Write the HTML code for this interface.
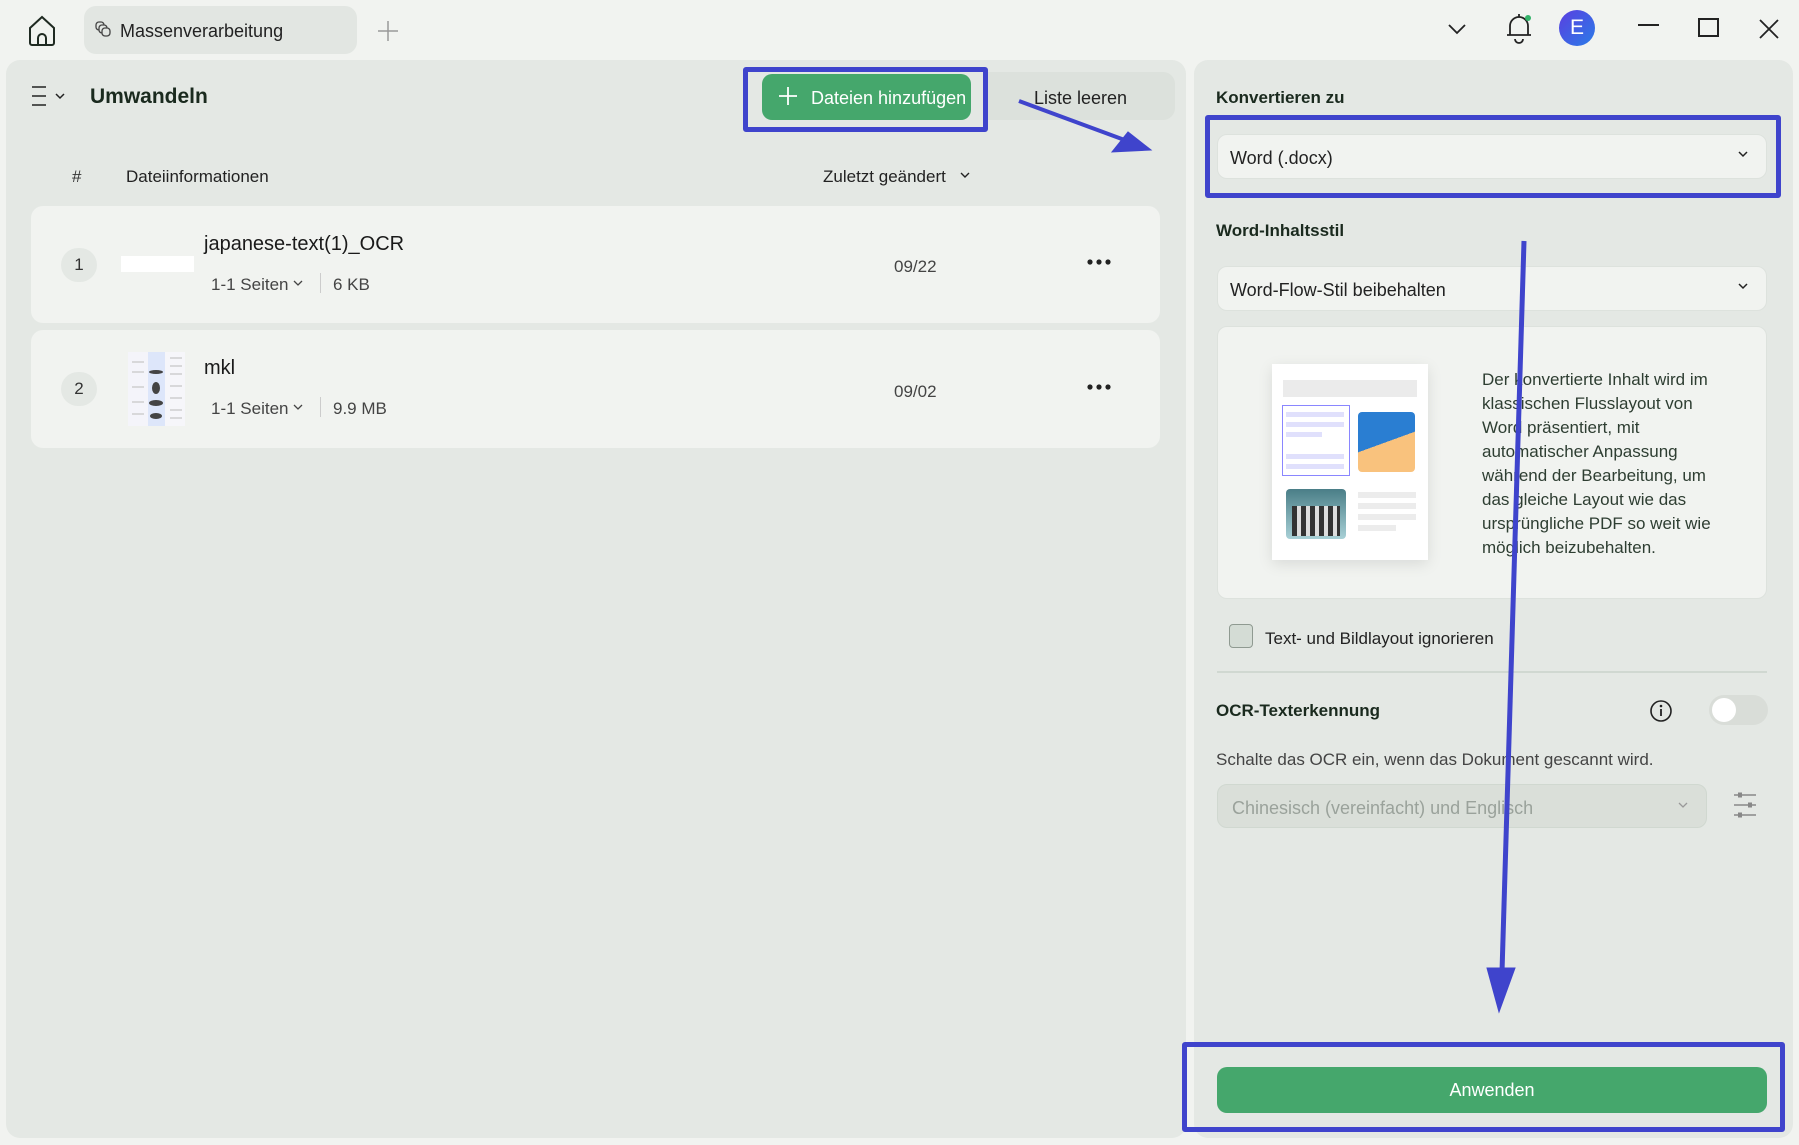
<!DOCTYPE html>
<html><head><meta charset="utf-8"><style>
*{box-sizing:border-box;margin:0;padding:0}
body{width:1799px;height:1145px;background:#f1f3f0;font-family:"Liberation Sans",sans-serif;color:#1f2a22;position:relative;overflow:hidden}
.a{position:absolute}
.panel{background:#e4e8e4;border-radius:14px}
.card{background:#f1f3f0;border-radius:12px}
.dd{background:#f1f3f0;border:1px solid #dde2dd;border-radius:10px}
.t{white-space:nowrap}
.blue{border:5px solid #3f44cc;border-radius:3px}
</style></head><body>
<svg class="a" style="left:26px;top:14px" width="32" height="34" viewBox="0 0 32 34"><path d="M4 14 L16 3 L28 14 V29 a2 2 0 0 1 -2 2 H6 a2 2 0 0 1 -2 -2 Z" fill="none" stroke="#1f2a22" stroke-width="2"/><path d="M12 31 V24 a4 4 0 0 1 8 0 V31" fill="none" stroke="#1f2a22" stroke-width="2"/></svg>
<div class="a" style="left:84px;top:6px;width:273px;height:48px;background:#e2e6e2;border-radius:12px"></div>
<svg class="a" style="left:95px;top:21px" width="16" height="16" viewBox="0 0 16 16"><rect x="1" y="1" width="8" height="8" rx="3" fill="none" stroke="#444" stroke-width="1.3"/><rect x="4" y="4" width="8" height="8" rx="3" fill="#e2e6e2" stroke="#444" stroke-width="1.3"/><rect x="7" y="7" width="8" height="8" rx="3" fill="#e2e6e2" stroke="#444" stroke-width="1.3"/></svg>
<div class="a t" style="left:120px;top:21px;font-size:18px;color:#222">Massenverarbeitung</div>
<svg class="a" style="left:377px;top:20px" width="22" height="22"><path d="M11 1V21M1 11H21" stroke="#999" stroke-width="1.5"/></svg>
<svg class="a" style="left:1447px;top:22px" width="20" height="14"><path d="M2 3 L10 11 L18 3" fill="none" stroke="#222" stroke-width="1.8"/></svg>
<svg class="a" style="left:1504px;top:12px" width="30" height="32" viewBox="0 0 30 32"><path d="M6 23 V14 a9 9 0 0 1 18 0 V23 H3 H27" fill="none" stroke="#222" stroke-width="1.8"/><path d="M15 2v3M11 27 a4 4 0 0 0 8 0" fill="none" stroke="#222" stroke-width="1.8"/><circle cx="24" cy="6" r="3" fill="#34b36a"/></svg>
<div class="a" style="left:1559px;top:10px;width:36px;height:36px;border-radius:50%;background:linear-gradient(135deg,#5a3ee0,#2a7ce8);color:#fff;font-size:21px;text-align:center;line-height:36px">E</div>
<div class="a" style="left:1638px;top:24px;width:21px;height:2px;background:#222"></div>
<div class="a" style="left:1698px;top:18px;width:21px;height:19px;border:2px solid #222"></div>
<svg class="a" style="left:1759px;top:19px" width="20" height="20"><path d="M1 1L19 19M19 1L1 19" stroke="#222" stroke-width="1.8"/></svg>

<div class="a panel" style="left:6px;top:60px;width:1180px;height:1078px"></div>
<svg class="a" style="left:30px;top:85px" width="40" height="22"><path d="M2 2H16M2 11H16M2 20H16" stroke="#222" stroke-width="1.6"/><path d="M26 9L30 13L34 9" fill="none" stroke="#222" stroke-width="1.5"/></svg>
<div class="a t" style="left:90px;top:85px;font-size:21px;font-weight:bold;color:#1a2a1e">Umwandeln</div>
<div class="a" style="left:987px;top:72px;width:188px;height:48px;background:#dce1dc;border-radius:0 12px 12px 0"></div>
<div class="a t" style="left:1034px;top:88px;font-size:18px;color:#222">Liste leeren</div>
<div class="a blue" style="left:743px;top:67px;width:245px;height:65px"></div>
<div class="a" style="left:762px;top:74px;width:209px;height:46px;background:#45a76c;border-radius:10px"></div>
<svg class="a" style="left:778px;top:86px" width="20" height="20"><path d="M10 1V19M1 10H19" stroke="#fff" stroke-width="1.8"/></svg>
<div class="a t" style="left:811px;top:88px;font-size:18px;color:#fff">Dateien hinzufügen</div>

<div class="a t" style="left:72px;top:167px;font-size:17px;color:#333">#</div>
<div class="a t" style="left:126px;top:167px;font-size:17px;color:#222">Dateiinformationen</div>
<div class="a t" style="left:823px;top:167px;font-size:17px;color:#222">Zuletzt geändert</div>
<svg class="a" style="left:959px;top:171px" width="12" height="10"><path d="M2 2L6 6L10 2" fill="none" stroke="#222" stroke-width="1.4"/></svg>

<div class="a card" style="left:31px;top:206px;width:1129px;height:117px"></div>
<div class="a" style="left:61px;top:248px;width:36px;height:34px;border-radius:17px;background:#e4e8e4;text-align:center;line-height:34px;font-size:17px;color:#333">1</div>
<div class="a" style="left:121px;top:256px;width:73px;height:16px;background:#fff"></div>
<div class="a t" style="left:204px;top:233px;font-size:20px;color:#1a1a1a">japanese-text(1)_OCR</div>
<div class="a t" style="left:211px;top:275px;font-size:17px;color:#444">1-1 Seiten</div>
<svg class="a" style="left:292px;top:279px" width="12" height="10"><path d="M2 2L6 6L10 2" fill="none" stroke="#444" stroke-width="1.3"/></svg>
<div class="a" style="left:320px;top:273px;width:1px;height:20px;background:#ccc"></div>
<div class="a t" style="left:333px;top:275px;font-size:17px;color:#444">6 KB</div>
<div class="a t" style="left:894px;top:257px;font-size:17px;color:#444">09/22</div>
<svg class="a" style="left:1086px;top:258px" width="26" height="8"><circle cx="4" cy="4" r="2.6" fill="#222"/><circle cx="13" cy="4" r="2.6" fill="#222"/><circle cx="22" cy="4" r="2.6" fill="#222"/></svg>

<div class="a card" style="left:31px;top:330px;width:1129px;height:118px"></div>
<div class="a" style="left:61px;top:372px;width:36px;height:34px;border-radius:17px;background:#e4e8e4;text-align:center;line-height:34px;font-size:17px;color:#333">2</div>
<div class="a" style="left:128px;top:352px;width:57px;height:74px;background:linear-gradient(90deg,#f4f4fa 0 35%,#dde6fa 35% 65%,#f6f6fa 65%)"></div>
<svg class="a" style="left:128px;top:352px" width="57" height="74"><g stroke="#bbb" stroke-width="1"><path d="M4 10h12M4 20h12M4 35h12M4 50h12M4 62h12M42 6h12M42 14h12M42 22h12M42 34h12M42 46h12M42 58h12M42 66h12"/></g><g fill="#444"><ellipse cx="28" cy="20" rx="7" ry="2"/><ellipse cx="28" cy="36" rx="4" ry="6"/><ellipse cx="28" cy="51" rx="7" ry="3"/><ellipse cx="28" cy="64" rx="6" ry="3"/></g></svg>
<div class="a t" style="left:204px;top:357px;font-size:20px;color:#1a1a1a">mkl</div>
<div class="a t" style="left:211px;top:399px;font-size:17px;color:#444">1-1 Seiten</div>
<svg class="a" style="left:292px;top:403px" width="12" height="10"><path d="M2 2L6 6L10 2" fill="none" stroke="#444" stroke-width="1.3"/></svg>
<div class="a" style="left:320px;top:397px;width:1px;height:20px;background:#ccc"></div>
<div class="a t" style="left:333px;top:399px;font-size:17px;color:#444">9.9 MB</div>
<div class="a t" style="left:894px;top:382px;font-size:17px;color:#444">09/02</div>
<svg class="a" style="left:1086px;top:383px" width="26" height="8"><circle cx="4" cy="4" r="2.6" fill="#222"/><circle cx="13" cy="4" r="2.6" fill="#222"/><circle cx="22" cy="4" r="2.6" fill="#222"/></svg>

<div class="a panel" style="left:1194px;top:60px;width:599px;height:1078px"></div>
<div class="a t" style="left:1216px;top:88px;font-size:17px;font-weight:bold;color:#1a2a1e">Konvertieren zu</div>
<div class="a dd" style="left:1217px;top:134px;width:550px;height:45px"></div>
<div class="a t" style="left:1230px;top:148px;font-size:18px;color:#222">Word (.docx)</div>
<svg class="a" style="left:1737px;top:150px" width="12" height="10"><path d="M2 2L6 6L10 2" fill="none" stroke="#222" stroke-width="1.5"/></svg>
<div class="a blue" style="left:1205px;top:115px;width:576px;height:83px"></div>
<div class="a t" style="left:1216px;top:221px;font-size:17px;font-weight:bold;color:#1a2a1e">Word-Inhaltsstil</div>
<div class="a dd" style="left:1217px;top:266px;width:550px;height:45px"></div>
<div class="a t" style="left:1230px;top:280px;font-size:18px;color:#222">Word-Flow-Stil beibehalten</div>
<svg class="a" style="left:1737px;top:282px" width="12" height="10"><path d="M2 2L6 6L10 2" fill="none" stroke="#222" stroke-width="1.5"/></svg>
<div class="a dd" style="left:1217px;top:326px;width:550px;height:273px"></div>
<div class="a" style="left:1272px;top:364px;width:156px;height:196px;background:#fff;box-shadow:0 4px 14px rgba(0,0,0,.1)"></div>
<div class="a" style="left:1283px;top:380px;width:134px;height:17px;background:#ebebeb"></div>
<div class="a" style="left:1282px;top:405px;width:68px;height:71px;border:1.5px solid #8a86ff"></div>
<div class="a" style="left:1286px;top:412px;width:58px;height:5px;background:#e0e0fc"></div>
<div class="a" style="left:1286px;top:422px;width:58px;height:5px;background:#e0e0fc"></div>
<div class="a" style="left:1286px;top:432px;width:36px;height:5px;background:#e0e0fc"></div>
<div class="a" style="left:1286px;top:454px;width:58px;height:5px;background:#e0e0fc"></div>
<div class="a" style="left:1286px;top:464px;width:58px;height:5px;background:#e0e0fc"></div>
<div class="a" style="left:1358px;top:412px;width:57px;height:60px;border-radius:4px;background:linear-gradient(160deg,#2a7ed2 0 50%,#f9c27d 50%)"></div>
<div class="a" style="left:1286px;top:489px;width:60px;height:50px;border-radius:4px;background:linear-gradient(#4a7e87,#a8d0d6)"></div>
<div class="a" style="left:1292px;top:506px;width:48px;height:30px;background:repeating-linear-gradient(90deg,#333 0 5px,#ddd 5px 9px)"></div>
<div class="a" style="left:1358px;top:492px;width:58px;height:6px;background:#ececec"></div>
<div class="a" style="left:1358px;top:503px;width:58px;height:6px;background:#ececec"></div>
<div class="a" style="left:1358px;top:514px;width:58px;height:6px;background:#ececec"></div>
<div class="a" style="left:1358px;top:525px;width:38px;height:6px;background:#ececec"></div>
<div class="a" style="left:1482px;top:368px;font-size:17px;line-height:24px;color:#2e3e32;width:250px">Der konvertierte Inhalt wird im klassischen Flusslayout von Word präsentiert, mit automatischer Anpassung während der Bearbeitung, um das gleiche Layout wie das ursprüngliche PDF so weit wie möglich beizubehalten.</div>

<div class="a" style="left:1229px;top:624px;width:24px;height:24px;border:1.5px solid #8f9a91;border-radius:4px;background:#d4dcd5"></div>
<div class="a t" style="left:1265px;top:629px;font-size:17px;color:#222">Text- und Bildlayout ignorieren</div>
<div class="a" style="left:1217px;top:671px;width:550px;height:2px;background:#d0d8d1"></div>
<div class="a t" style="left:1216px;top:701px;font-size:17px;font-weight:bold;color:#1a2a1e">OCR-Texterkennung</div>
<svg class="a" style="left:1649px;top:699px" width="24" height="24"><circle cx="12" cy="12" r="10" fill="none" stroke="#222" stroke-width="1.6"/><path d="M12 10V17" stroke="#222" stroke-width="1.8"/><circle cx="12" cy="7" r="1.3" fill="#222"/></svg>
<div class="a" style="left:1709px;top:695px;width:59px;height:30px;border-radius:15px;background:#d9ddd8"></div>
<div class="a" style="left:1712px;top:698px;width:24px;height:24px;border-radius:50%;background:#fff"></div>
<div class="a t" style="left:1216px;top:750px;font-size:17px;color:#444">Schalte das OCR ein, wenn das Dokument gescannt wird.</div>
<div class="a" style="left:1217px;top:784px;width:490px;height:44px;border-radius:10px;background:#dadfd9;border:1px solid #d0d8d0"></div>
<div class="a t" style="left:1232px;top:798px;font-size:18px;color:#9aa29b">Chinesisch (vereinfacht) und Englisch</div>
<svg class="a" style="left:1677px;top:801px" width="12" height="10"><path d="M2 2L6 6L10 2" fill="none" stroke="#999" stroke-width="1.3"/></svg>
<svg class="a" style="left:1732px;top:791px" width="26" height="28"><g stroke="#888" stroke-width="1.4"><path d="M2 4H24M2 14H24M2 24H24"/></g><g fill="#888"><rect x="6" y="1.5" width="4" height="5"/><rect x="16" y="11.5" width="4" height="5"/><rect x="6" y="21.5" width="4" height="5"/></g></svg>

<div class="a blue" style="left:1182px;top:1042px;width:603px;height:90px"></div>
<div class="a" style="left:1217px;top:1067px;width:550px;height:46px;background:#45a76c;border-radius:10px;text-align:center;line-height:46px;color:#fff;font-size:18px">Anwenden</div>

<svg class="a" style="left:0;top:0" width="1799" height="1145"><g fill="#3f44cc" stroke="#3f44cc"><path d="M1019 101 L1130 142" stroke-width="4"/><path d="M1151 150 L1112 152 L1128 132 Z" stroke-width="1"/><path d="M1524 241 L1502 972" stroke-width="5"/><path d="M1499 1012 L1487 968 L1515 968 Z" stroke-width="1"/></g></svg>
</body></html>
